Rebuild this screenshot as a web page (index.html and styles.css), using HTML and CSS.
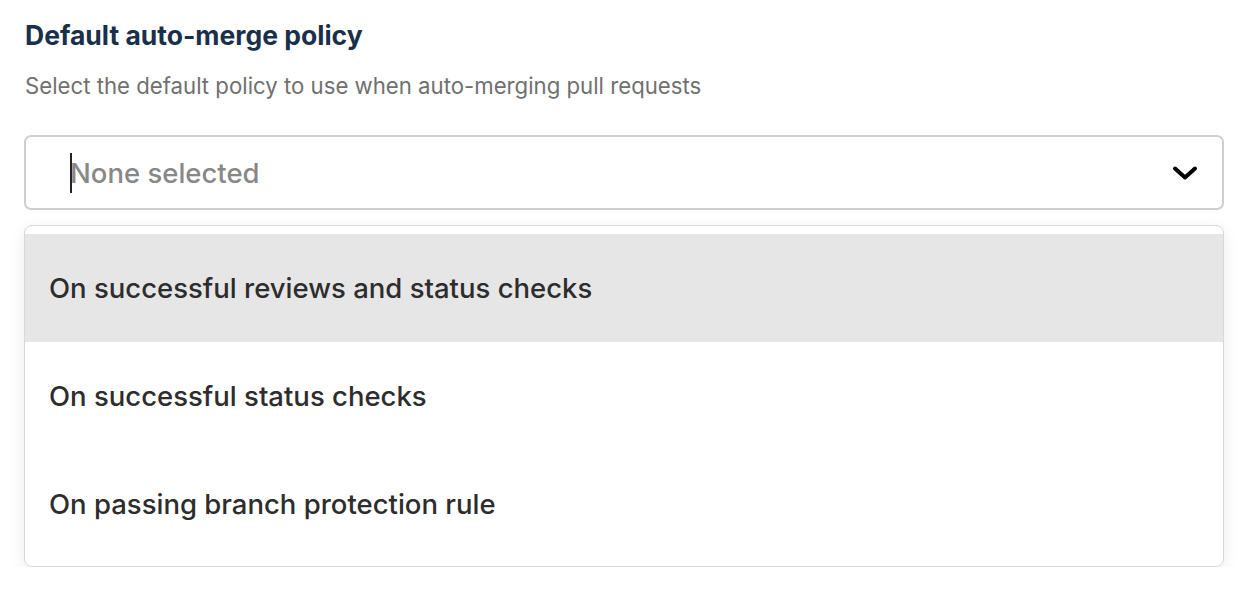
FILE: index.html
```html
<!DOCTYPE html>
<html>
<head>
<meta charset="utf-8">
<link rel="stylesheet" href="styles.css">
</head>
<body>
<div class="field">
  <h2 class="title">Default auto-merge policy</h2>
  <p class="desc">Select the default policy to use when auto-merging pull requests</p>
  <div class="select">
    <span class="caret"></span>
    <span class="placeholder">None selected</span>
    <svg class="chevron" width="26" height="16" viewBox="0 0 26 16"><path d="M3 3.5 L13 12.5 L23 3.5" fill="none" stroke="#000" stroke-width="4" stroke-linecap="round" stroke-linejoin="round"/></svg>
  </div>
  <div class="menu">
    <div class="option active">On successful reviews and status checks</div>
    <div class="option">On successful status checks</div>
    <div class="option">On passing branch protection rule</div>
  </div>
</div>
</body>
</html>
```
FILE: styles.css
```css
html, body { margin: 0; padding: 0; background: #fff; }
body { font-family: Inter, "Liberation Sans", Arial, sans-serif; }
.field { padding: 19px 24px 0 24px; width: 1200px; }
.title { margin: 0 0 0 1px; font-size: 26.5px; line-height: 32px; font-weight: 700; color: #1a2f4a; }
.desc { margin: 20px 0 0 1px; font-size: 22.2px; line-height: 30px; color: #707070; }
.select {
  margin-top: 34px;
  height: 75px; box-sizing: border-box;
  border: 2px solid #cfcfcf; border-radius: 7px;
  display: flex; align-items: center; padding: 0 24px 0 44px;
}
.caret { width: 2px; height: 40px; background: #222; margin-right: -2px; }
.placeholder { flex: 1; font-size: 27.5px; color: #888; font-weight: 500; }
.chevron { display: block; }
.menu {
  margin-top: 15px;
  border: 1px solid #d8d8d8; border-radius: 8px;
  box-shadow: 0 4px 16px rgba(0,0,0,0.08);
  padding: 8px 0;
  overflow: hidden;
}
.option { height: 108px; display: flex; align-items: center; padding-left: 24px; font-size: 27.5px; color: #2d2d2d; font-weight: 500; }
.option.active { background: #e6e6e6; }
```
